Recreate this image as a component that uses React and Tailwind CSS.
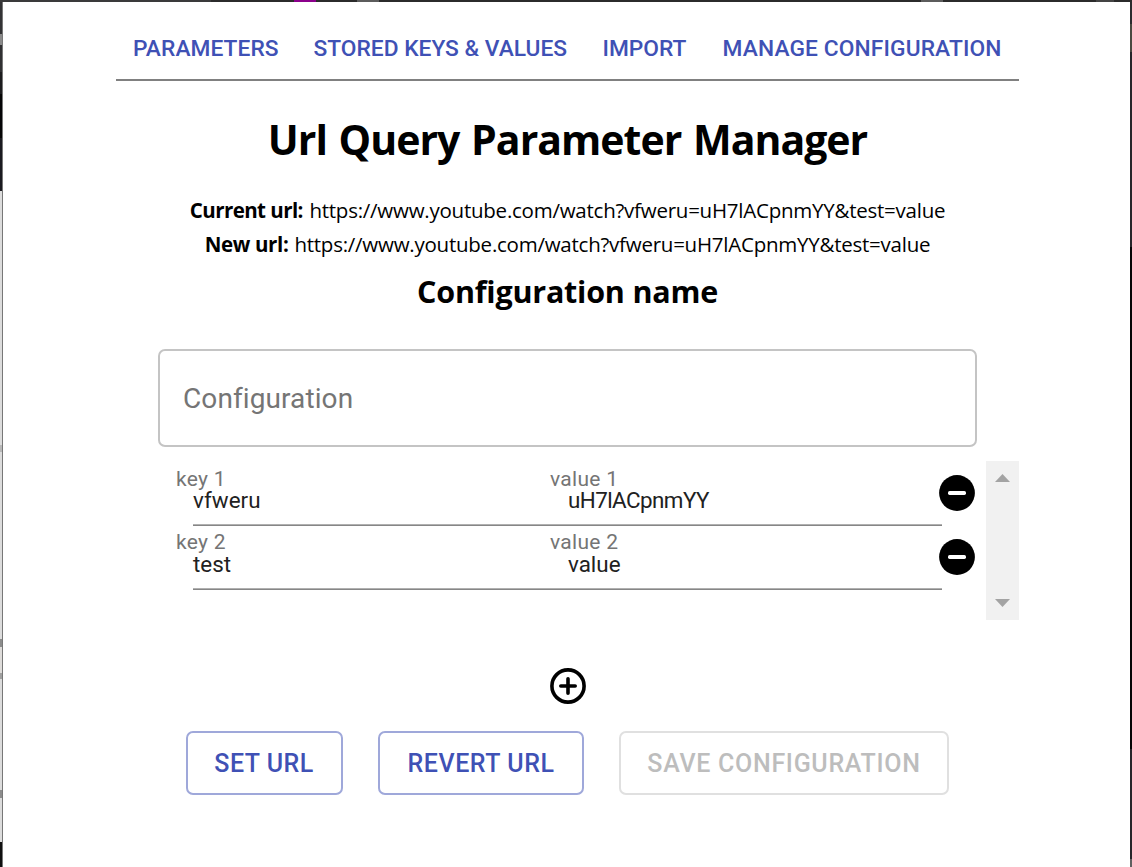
const navItems = [
  { label: "PARAMETERS", box: "w-[180.5px]", text: "tracking-[0.05px]" },
  { label: "STORED KEYS & VALUES", box: "w-[289px]", text: "" },
  { label: "IMPORT", box: "w-[120px]", text: "" },
  { label: "MANAGE CONFIGURATION", box: "", text: "tracking-[0.12px]" },
];

const rows = [
  {
    id: 1, name: "vfweru", value: "uH7lACpnmYY", pad: "pt-[7px]", height: "h-[65px]", gap: "",
    nameText: "tracking-[0.02px]", valueText: "tracking-[-0.56px]",
  },
  {
    id: 2, name: "test", value: "value", pad: "pt-[5px]", height: "h-[64px]", gap: "mt-px",
    nameText: "", valueText: "",
  },
];

const buttons = [
  { label: "SET URL", style: "w-[157px] border-[#9fa8da] text-[#3f51b5] tracking-[0.5px] pr-px" },
  { label: "REVERT URL", style: "w-[206px] border-[#9fa8da] text-[#3f51b5] tracking-[0.55px]" },
  { label: "SAVE CONFIGURATION", style: "w-[330px] border-[#e0e0e0] text-[#bdbdbd] tracking-[0.7px]" },
];

const leftEdge = [
  "h-[32px] bg-[#333335]", "h-[11px] bg-[#8a8a8a]", "h-[27px] bg-[#303032]", "h-[22px] bg-[#1c1c1e]",
  "h-[44px] bg-[#050506]", "h-[53px] bg-[#1b1a20]", "h-[254px] bg-[#dcdcdc]", "h-[7px] bg-[#b8b8b8]",
  "h-[187px] bg-[#dcdcdc]", "h-[8px] bg-[#8c8c8c]", "h-[26px] bg-[#dedcda]", "h-[6px] bg-[#a0a0a0]",
  "h-[111px] bg-[#dcdcdc]", "h-[8px] bg-[#8c8c8c]", "h-[44px] bg-[#dcdcdc]", "h-[25px] bg-[#101010]",
];

function RemoveIcon() {
  return (
    <svg className="h-9 w-9" viewBox="0 0 36 36">
      <circle cx="18" cy="18" r="17.9" fill="#000" />
      <rect x="9" y="16.1" width="18" height="3.8" rx="1.6" fill="#fff" />
    </svg>
  );
}

function AddIcon() {
  return (
    <svg className="h-9 w-9" viewBox="0 0 36 36" fill="none" stroke="#000" strokeLinecap="round">
      <circle cx="18" cy="18" r="16.1" strokeWidth="3.6" />
      <path d="M18 10.8v14.4M10.8 18h14.4" strokeWidth="3.6" />
    </svg>
  );
}

function UrlLine({ label, url, labelClass, urlClass }) {
  return (
    <p className="flex h-[34px] items-center whitespace-nowrap text-[20.5px] leading-[34px]">
      <strong className={`font-bold ${labelClass}`}>{label}</strong>
      <span className={urlClass}>{url}</span>
    </p>
  );
}

function ParameterRow({ row }) {
  return (
    <div className={`flex ${row.height}`}>
      <div className={`flex w-[766px] flex-col ${row.pad}`}>
        <div className="flex h-[22px] text-[21px] leading-[22px] tracking-[0.3px] text-[#757575]">
          <span className="w-[374px]">key {row.id}</span>
          <span>value {row.id}</span>
        </div>
        <div className={`flex h-[21px] pl-[17px] text-[22.4px] leading-[21px] text-[#212121] ${row.gap}`}>
          <span className={`w-[375px] ${row.nameText}`}>{row.name}</span>
          <span className={row.valueText}>{row.value}</span>
        </div>
        <div className="mt-auto ml-[17px] h-[2px] border-t border-[#b0b0b0] bg-[#868686]" />
      </div>
      <button className={row.id === 1 ? "mt-[14px] -ml-[3.5px] h-9" : "mt-[13px] -ml-[3.5px] h-9"} aria-label="Remove">
        <RemoveIcon />
      </button>
    </div>
  );
}

export default function App() {
  return (
    <div className="flex h-[867px] w-[1132px] flex-col overflow-hidden bg-white font-['Roboto',sans-serif]">
      <div className="flex h-[2px] shrink-0 bg-[#2b2b2b]">
        <div className="w-[211px] bg-[#3a3a3b]" />
        <div className="ml-[83px] w-[22px] bg-[#8b008b]" />
        <div className="ml-[41px] w-[22px] bg-[#5c5c5c]" />
        <div className="ml-[542px] w-[22px] bg-[#5c5c5c]" />
        <div className="ml-[153px] w-[18px] bg-[#444444]" />
      </div>
      <div className="flex min-h-0 flex-1">
        <div className="flex w-[3px] shrink-0 flex-col border-r border-[#777777]">
          {leftEdge.map((style, i) => (
            <div key={i} className={`shrink-0 ${style}`} />
          ))}
        </div>

        <main className="flex w-[1127px] flex-col items-center pl-[2px]">
          <nav className="flex h-[79px] w-[903px] border-b-2 border-[#808080] pt-[31px] pl-[17px]">
            {navItems.map((item) => (
              <a
                key={item.label}
                className={`h-8 whitespace-nowrap text-[22.75px] leading-8 font-medium text-[#3f51b5] ${item.box} ${item.text}`}
              >
                {item.label}
              </a>
            ))}
          </nav>

          <div className="flex flex-col items-center pt-[30px] font-['Open_Sans',sans-serif] text-black">
            <h1 className="h-14 whitespace-nowrap text-[41px] leading-[56px] font-bold tracking-[-0.98px] [word-spacing:2px]">
              Url Query Parameter Manager
            </h1>
            <div className="mt-[26px] flex flex-col items-center">
              <UrlLine
                label="Current url:"
                url="https://www.youtube.com/watch?vfweru=uH7lACpnmYY&test=value"
                labelClass="tracking-[-0.56px] mr-[6.5px]"
                urlClass="tracking-[-0.24px]"
              />
              <UrlLine
                label="New url:"
                url="https://www.youtube.com/watch?vfweru=uH7lACpnmYY&test=value"
                labelClass="tracking-[-0.36px] mr-[6px]"
                urlClass="tracking-[-0.24px]"
              />
            </div>
            <h2 className="mt-2 h-11 whitespace-nowrap text-[30.5px] leading-[44px] font-bold tracking-[-0.22px]">
              Configuration name
            </h2>
          </div>

          <div className="mt-9 flex h-[98px] w-[819px] shrink-0 items-center rounded-[7px] border-2 border-[#c4c4c4] pt-[2px] pl-[23px] text-[28px] tracking-[0.1px] text-[#757575]">
            Configuration
          </div>

          <div className="mt-[14px] flex h-[159px] w-[903px] shrink-0 justify-between">
            <div className="flex flex-col pl-[60px]">
              {rows.map((row) => (
                <ParameterRow key={row.id} row={row} />
              ))}
            </div>
            <div className="flex w-[33px] flex-col items-center justify-between bg-[#f1f1f1] pt-[13px] pb-[13px]">
              <svg className="h-2 w-[15px]" viewBox="0 0 15 8">
                <path d="M7.5 0L15 8H0z" fill="#a3a3a3" />
              </svg>
              <svg className="h-2 w-[15px]" viewBox="0 0 15 8">
                <path d="M0 0h15L7.5 8z" fill="#a3a3a3" />
              </svg>
            </div>
          </div>

          <button className="mt-12 h-9 shrink-0" aria-label="Add">
            <AddIcon />
          </button>

          <div className="mt-[27px] flex shrink-0 gap-[35px]">
            {buttons.map((button) => (
              <button
                key={button.label}
                className={`h-16 rounded-[7px] border-2 pt-px text-center text-[25px] leading-[60px] font-medium whitespace-nowrap ${button.style}`}
              >
                {button.label}
              </button>
            ))}
          </div>
        </main>

        <div className="flex w-[2px] shrink-0 flex-col bg-[#050505]">
          <div className="h-[22px] bg-[#2b2b2e]" />
          <div className="h-[28px] bg-[#4a4940]" />
          <div className="h-[195px] bg-[#26262a]" />
          <div className="mt-auto h-[110px] bg-[#26262a]" />
          <div className="h-[8px] bg-[#606060]" />
        </div>
      </div>
    </div>
  );
}
